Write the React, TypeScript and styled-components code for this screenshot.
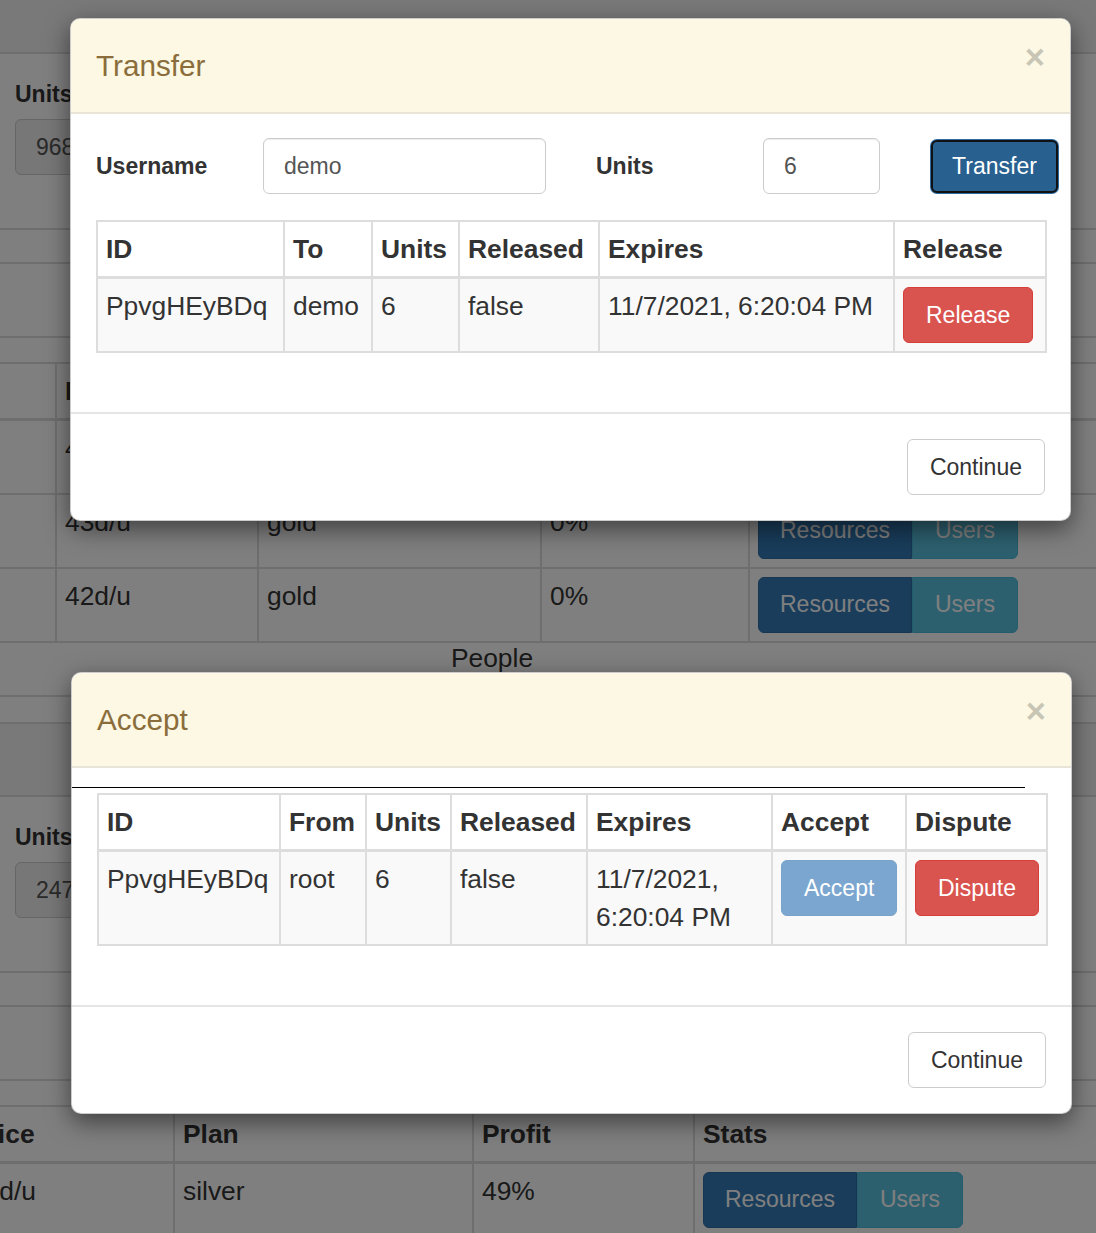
import React from "react";
import styled, { createGlobalStyle, css } from "styled-components";

const GlobalStyle = createGlobalStyle`
  html, body { margin: 0; padding: 0; }
  body {
    font-family: "Liberation Sans", Arial, Helvetica, sans-serif;
    font-size: 23px;
    line-height: 1.42857;
    color: #333;
    background: #fff;
  }
  *, *::before, *::after { box-sizing: border-box; }
`;

const Viewport = styled.div`
  position: relative;
  width: 1096px;
  height: 1233px;
  overflow: hidden;
  background: #fff;
`;

const Page = styled.div`
  display: flex;
  flex-direction: column;
  align-items: flex-start;
`;

/* ---------- background page ---------- */

const Section = styled.section<{ $offset?: number }>`
  display: flex;
  flex-direction: column;
  align-items: flex-start;
  align-self: stretch;
  margin-top: ${(p) => p.$offset ?? 0}px;
`;

const Band = styled.div<{ $h: number; $shade?: boolean }>`
  align-self: stretch;
  height: ${(p) => p.$h}px;
  border-top: 2px solid #ddd;
  background: ${(p) => (p.$shade ? "#f2f2f2" : "transparent")};
`;

const FormBlock = styled.div`
  align-self: stretch;
  height: 176px;
  border-top: 2px solid #ddd;
  padding: 24px 15px 0;
  display: flex;
  flex-direction: column;
  align-items: flex-start;
  gap: 8px;
`;

const BgLabel = styled.label`
  font-weight: bold;
  line-height: 33px;
`;

const BgInput = styled.input`
  width: 520px;
  height: 56px;
  padding: 10px 20px;
  font: inherit;
  color: #555;
  background: #eee;
  border: 1px solid #ccc;
  border-radius: 6px;
`;

const BgTable = styled.table<{ $shift?: number; $width: number }>`
  flex-shrink: 0;
  width: ${(p) => p.$width}px;
  border-collapse: collapse;
  table-layout: fixed;
  margin-left: ${(p) => p.$shift ?? 0}px;
  font-size: 26.4px;
  line-height: 38px;
  th, td {
    border: 2px solid #ddd;
    padding: 8px;
    text-align: left;
    vertical-align: top;
  }
  th {
    border-bottom-width: 3px;
    vertical-align: bottom;
  }
`;

const Caption = styled.div`
  width: 984px;
  height: 52px;
  text-align: center;
  font-size: 26.4px;
  line-height: 30px;
`;

const BtnGroup = styled.div`
  display: inline-flex;
`;

const GroupBtn = styled.span<{ $kind: "primary" | "info" }>`
  display: inline-block;
  height: 56px;
  padding: 10px 21px;
  font-size: 23px;
  line-height: 33px;
  color: #fff;
  border: 1px solid;
  ${(p) =>
    p.$kind === "primary"
      ? css`
          background: #337ab7;
          border-color: #2e6da4;
          border-radius: 6px 0 0 6px;
        `
      : css`
          background: #5bc0de;
          border-color: #46b8da;
          border-radius: 0 6px 6px 0;
          padding: 10px 22px;
        `}
`;

const StatsButtons = () => (
  <BtnGroup>
    <GroupBtn $kind="primary">Resources</GroupBtn>
    <GroupBtn $kind="info">Users</GroupBtn>
  </BtnGroup>
);

/* ---------- overlay & modal ---------- */

const Backdrop = styled.div`
  position: absolute;
  inset: 0;
  background: rgba(0, 0, 0, 0.5);
`;

const ModalBox = styled.div<{ $top: number; $left: number }>`
  position: absolute;
  top: ${(p) => p.$top}px;
  left: ${(p) => p.$left}px;
  width: 1001px;
  background: #fff;
  border: 1px solid rgba(0, 0, 0, 0.2);
  border-radius: 10px;
  box-shadow: 0 8px 25px rgba(0, 0, 0, 0.5);
  overflow: hidden;
`;

const ModalHeader = styled.div`
  display: flex;
  justify-content: space-between;
  align-items: flex-start;
  padding: 25px;
  background: #fcf8e3;
  border-bottom: 2px solid #e8e5d8;
`;

const ModalTitle = styled.h4`
  margin: 0;
  font-size: 29.7px;
  line-height: 43px;
  font-weight: normal;
  color: #8a6d3b;
`;

const CloseX = styled.span`
  margin-top: -4px;
  font-size: 34.6px;
  line-height: 1;
  font-weight: bold;
  color: #000;
  opacity: 0.2;
  text-shadow: 0 1px 0 #fff;
`;

const ModalBody = styled.div<{ $padTop?: number }>`
  padding: ${(p) => p.$padTop ?? 24}px 25px 25px;
`;

const ModalFooter = styled.div`
  display: flex;
  justify-content: flex-end;
  padding: 25px;
  border-top: 2px solid #e5e5e5;
`;

const FormRow = styled.div`
  display: grid;
  grid-template-columns: 167px 333px 167px 167px 167px;
  align-items: center;
  margin: 0 -25px 26px;
  & > * {
    margin-left: 25px;
    margin-right: 25px;
  }
`;

const FieldLabel = styled.label`
  font-weight: bold;
  line-height: 33px;
`;

const TextInput = styled.input`
  width: auto;
  min-width: 0;
  height: 56px;
  padding: 10px 20px;
  font: inherit;
  color: #555;
  background: #fff;
  border: 1px solid #ccc;
  border-radius: 6px;
  box-shadow: inset 0 1px 1px rgba(0, 0, 0, 0.075);
`;

const Btn = styled.button<{ $variant: "default" | "danger" | "primary" | "faded" }>`
  height: 56px;
  padding: 10px 22px;
  font: inherit;
  font-size: 23px;
  line-height: 33px;
  border: 1px solid;
  border-radius: 6px;
  white-space: nowrap;
  justify-self: start;
  ${(p) => {
    switch (p.$variant) {
      case "danger":
        return css`
          color: #fff;
          background: #d9534f;
          border-color: #d43f3a;
        `;
      case "primary":
        return css`
          height: 53px;
          width: 127px;
          margin-left: 26px !important;
          color: #fff;
          background: #286090;
          border: 2px solid #111;
          box-shadow: 0 0 0 1px #2e6da4;
          padding: 8px 18px;
        `;
      case "faded":
        return css`
          color: #fff;
          background: #7aa6cf;
          border-color: #79a3cb;
        `;
      default:
        return css`
          color: #333;
          background: #fff;
          border-color: #ccc;
        `;
    }
  }}
`;

const DataTable = styled.table`
  width: 949px;
  border-collapse: collapse;
  table-layout: fixed;
  font-size: 26.4px;
  line-height: 38px;
  th, td {
    border: 2px solid #ddd;
    padding: 8px;
    text-align: left;
    vertical-align: top;
  }
  th {
    border-bottom-width: 3px;
    vertical-align: bottom;
    background: #fff;
  }
  td {
    background: #f9f9f9;
  }
`;

const Rule = styled.div`
  width: 953px;
  height: 1px;
  margin: 0 0 5px -25px;
  background: #000;
`;

const Gap = styled.div`
  height: 34px;
`;

type Col = { label: string; w: number };

const transferCols: Col[] = [
  { label: "ID", w: 187 },
  { label: "To", w: 88 },
  { label: "Units", w: 87 },
  { label: "Released", w: 140 },
  { label: "Expires", w: 295 },
  { label: "Release", w: 152 },
];

const acceptCols: Col[] = [
  { label: "ID", w: 182 },
  { label: "From", w: 86 },
  { label: "Units", w: 85 },
  { label: "Released", w: 136 },
  { label: "Expires", w: 185 },
  { label: "Accept", w: 134 },
  { label: "Dispute", w: 141 },
];

const Head = ({ cols }: { cols: Col[] }) => (
  <>
    <colgroup>
      {cols.map((c) => (
        <col key={c.label} style={{ width: c.w }} />
      ))}
    </colgroup>
    <thead>
      <tr>
        {cols.map((c) => (
          <th key={c.label}>{c.label}</th>
        ))}
      </tr>
    </thead>
  </>
);

const bgColsA = [57, 202, 283, 208, 350];
const bgColsB = [213, 299, 221, 410];
const sum = (a: number[]) => a.reduce((s, v) => s + v, 0);

const BgSection = ({
  offset,
  value,
  children,
}: {
  offset?: number;
  value: string;
  children: React.ReactNode;
}) => (
  <Section $offset={offset}>
    <Band $h={27} />
    <Band $h={73} $shade />
    <FormBlock>
      <BgLabel>Units</BgLabel>
      <BgInput disabled defaultValue={value} />
    </FormBlock>
    <Band $h={34} />
    <Band $h={74} />
    <Band $h={26} />
    {children}
  </Section>
);

export default function App() {
  return (
    <>
      <GlobalStyle />
      <Viewport>
        <Page>
          <BgSection offset={-48} value="9680">
            <BgTable $shift={-2} $width={sum(bgColsA)}>
              <colgroup>
                {bgColsA.map((w, i) => (
                  <col key={i} style={{ width: w }} />
                ))}
              </colgroup>
              <thead>
                <tr>
                  <th></th>
                  <th>Price</th>
                  <th>Plan</th>
                  <th>Profit</th>
                  <th>Stats</th>
                </tr>
              </thead>
              <tbody>
                {["44d/u", "43d/u", "42d/u"].map((p) => (
                  <tr key={p}>
                    <td></td>
                    <td>{p}</td>
                    <td>gold</td>
                    <td>0%</td>
                    <td>
                      <StatsButtons />
                    </td>
                  </tr>
                ))}
              </tbody>
            </BgTable>
          </BgSection>
          <Caption>People</Caption>
          <BgSection value="2470">
            <BgTable $shift={-40} $width={sum(bgColsB)}>
              <colgroup>
                {bgColsB.map((w, i) => (
                  <col key={i} style={{ width: w }} />
                ))}
              </colgroup>
              <thead>
                <tr>
                  <th>Price</th>
                  <th>Plan</th>
                  <th>Profit</th>
                  <th>Stats</th>
                </tr>
              </thead>
              <tbody>
                <tr>
                  <td>51d/u</td>
                  <td>silver</td>
                  <td>49%</td>
                  <td>
                    <StatsButtons />
                  </td>
                </tr>
              </tbody>
            </BgTable>
          </BgSection>
        </Page>

        <Backdrop />

        <ModalBox $top={18} $left={70}>
          <ModalHeader>
            <ModalTitle>Transfer</ModalTitle>
            <CloseX>×</CloseX>
          </ModalHeader>
          <ModalBody>
            <FormRow>
              <FieldLabel>Username</FieldLabel>
              <TextInput defaultValue="demo" />
              <FieldLabel>Units</FieldLabel>
              <TextInput defaultValue="6" />
              <Btn $variant="primary">Transfer</Btn>
            </FormRow>
            <DataTable>
              <Head cols={transferCols} />
              <tbody>
                <tr>
                  <td>PpvgHEyBDq</td>
                  <td>demo</td>
                  <td>6</td>
                  <td>false</td>
                  <td>11/7/2021, 6:20:04 PM</td>
                  <td>
                    <Btn $variant="danger">Release</Btn>
                  </td>
                </tr>
              </tbody>
            </DataTable>
            <Gap />
          </ModalBody>
          <ModalFooter>
            <Btn $variant="default">Continue</Btn>
          </ModalFooter>
        </ModalBox>

        <ModalBox $top={672} $left={71}>
          <ModalHeader>
            <ModalTitle>Accept</ModalTitle>
            <CloseX>×</CloseX>
          </ModalHeader>
          <ModalBody $padTop={19}>
            <Rule />
            <DataTable>
              <Head cols={acceptCols} />
              <tbody>
                <tr>
                  <td>PpvgHEyBDq</td>
                  <td>root</td>
                  <td>6</td>
                  <td>false</td>
                  <td>11/7/2021, 6:20:04 PM</td>
                  <td>
                    <Btn $variant="faded">Accept</Btn>
                  </td>
                  <td>
                    <Btn $variant="danger">Dispute</Btn>
                  </td>
                </tr>
              </tbody>
            </DataTable>
            <Gap />
          </ModalBody>
          <ModalFooter>
            <Btn $variant="default">Continue</Btn>
          </ModalFooter>
        </ModalBox>
      </Viewport>
    </>
  );
}
